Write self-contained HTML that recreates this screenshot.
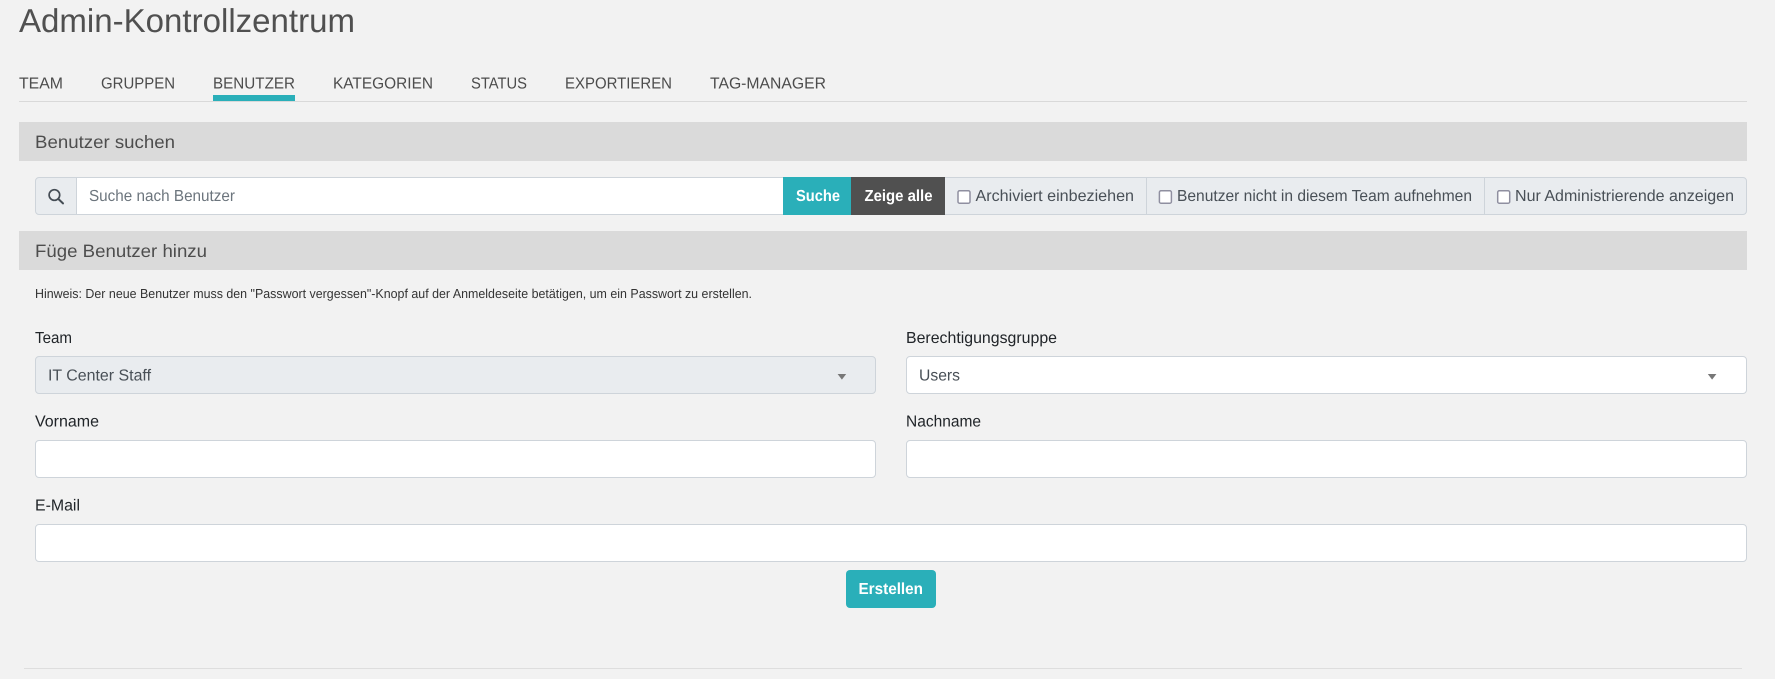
<!DOCTYPE html>
<html lang="de">
<head>
<meta charset="utf-8">
<title>Admin-Kontrollzentrum</title>
<style>
html,body{margin:0;padding:0;width:1775px;height:679px;overflow:hidden;background:#f2f2f2}
.b{position:absolute;box-sizing:border-box}
.f{border:1px solid #ced4da;border-radius:4px;background:#fff;height:38px}
.h{background:#dadada;left:19px;width:1728px;height:39px}
svg.o{position:absolute;left:0;top:0}
text{font-family:"Liberation Sans",sans-serif;text-rendering:geometricPrecision}
.cb{fill:#fff;stroke:#8f8fa0;stroke-width:1.5}
.t{font-size:16px;fill:#4c4c4c}
.l{font-size:16px;fill:#212529}
.a{font-size:16px;fill:#495057}
.w{font-size:16px;font-weight:700;fill:#fff}
.s{font-size:18px;fill:#4d4d4d}
</style>
</head>
<body>
<div class="b" style="left:19px;top:101px;width:1728px;height:1px;background:#d9d9d9"></div>
<div class="b" style="left:213px;top:95px;width:82px;height:6px;background:#2aafb9"></div>
<div class="b h" style="top:122px"></div>
<div class="b" style="left:35px;top:177px;width:1712px;height:38px;border:1px solid #ced4da;border-radius:4px;background:#e9ecef"></div>
<div class="b" style="left:76px;top:177px;width:707px;height:38px;background:#fff;border:1px solid #ced4da;border-right:0"></div>
<div class="b" style="left:783px;top:177px;width:68px;height:38px;background:#2aafb9"></div>
<div class="b" style="left:851px;top:177px;width:94px;height:38px;background:#505050"></div>
<div class="b" style="left:1146px;top:177px;width:1px;height:38px;background:#ced4da"></div>
<div class="b" style="left:1484px;top:177px;width:1px;height:38px;background:#ced4da"></div>
<div class="b h" style="top:231px"></div>
<div class="b f" style="left:35px;top:356px;width:841px;background:#e9ecef"></div>
<div class="b f" style="left:906px;top:356px;width:841px"></div>
<div class="b f" style="left:35px;top:440px;width:841px"></div>
<div class="b f" style="left:906px;top:440px;width:841px"></div>
<div class="b f" style="left:35px;top:524px;width:1712px"></div>
<div class="b" style="left:846px;top:570px;width:90px;height:38px;background:#2aafb9;border-radius:4px"></div>
<div class="b" style="left:24px;top:668px;width:1718px;height:1px;background:#dedede"></div>

<svg class="o" width="1775" height="679" viewBox="0 0 1775 679" xmlns="http://www.w3.org/2000/svg">
<text x="19" y="32" font-size="33" fill="#505050" textLength="336" lengthAdjust="spacingAndGlyphs">Admin-Kontrollzentrum</text>

<text class="t" x="19" y="88.5" textLength="44" lengthAdjust="spacingAndGlyphs">TEAM</text>
<text class="t" x="101" y="88.5" textLength="74" lengthAdjust="spacingAndGlyphs">GRUPPEN</text>
<text class="t" x="213" y="88.5" textLength="82" lengthAdjust="spacingAndGlyphs">BENUTZER</text>
<text class="t" x="333" y="88.5" textLength="100" lengthAdjust="spacingAndGlyphs">KATEGORIEN</text>
<text class="t" x="471" y="88.5" textLength="56" lengthAdjust="spacingAndGlyphs">STATUS</text>
<text class="t" x="565" y="88.5" textLength="107" lengthAdjust="spacingAndGlyphs">EXPORTIEREN</text>
<text class="t" x="710" y="88.5" textLength="116" lengthAdjust="spacingAndGlyphs">TAG-MANAGER</text>

<text class="s" x="35" y="148" textLength="140" lengthAdjust="spacingAndGlyphs">Benutzer suchen</text>

<circle cx="54.4" cy="195" r="5.3" fill="none" stroke="#444c54" stroke-width="1.7"/>
<path d="M58.4 199L63 203.4" fill="none" stroke="#444c54" stroke-width="2" stroke-linecap="round"/>
<text x="89" y="201" font-size="16" fill="#6c757d" textLength="146" lengthAdjust="spacingAndGlyphs">Suche nach Benutzer</text>
<text class="w" x="796" y="201" textLength="44" lengthAdjust="spacingAndGlyphs">Suche</text>
<text class="w" x="864.5" y="201" textLength="68" lengthAdjust="spacingAndGlyphs">Zeige alle</text>

<rect class="cb" x="958" y="190.8" width="12" height="12.4" rx="1.5"/>
<text class="a" x="975.5" y="201" textLength="158.5" lengthAdjust="spacingAndGlyphs">Archiviert einbeziehen</text>
<rect class="cb" x="1159.4" y="190.8" width="12" height="12.4" rx="1.5"/>
<text class="a" x="1177" y="201" textLength="295" lengthAdjust="spacingAndGlyphs">Benutzer nicht in diesem Team aufnehmen</text>
<rect class="cb" x="1497.7" y="190.8" width="12" height="12.4" rx="1.5"/>
<text class="a" x="1515" y="201" textLength="219" lengthAdjust="spacingAndGlyphs">Nur Administrierende anzeigen</text>

<text class="s" x="35" y="257" textLength="172" lengthAdjust="spacingAndGlyphs">Füge Benutzer hinzu</text>
<text x="35" y="298" font-size="13" fill="#333" textLength="717" lengthAdjust="spacingAndGlyphs">Hinweis: Der neue Benutzer muss den "Passwort vergessen"-Knopf auf der Anmeldeseite betätigen, um ein Passwort zu erstellen.</text>

<text class="l" x="35" y="343" textLength="37" lengthAdjust="spacingAndGlyphs">Team</text>
<text class="l" x="906" y="343" textLength="151" lengthAdjust="spacingAndGlyphs">Berechtigungsgruppe</text>
<text class="a" x="48" y="380.5" textLength="103" lengthAdjust="spacingAndGlyphs">IT Center Staff</text>
<path d="M837.6 374h8.6l-4.3 5.6z" fill="#777"/>
<text class="a" x="919" y="380.5" textLength="41" lengthAdjust="spacingAndGlyphs">Users</text>
<path d="M1707.8 374h8.6l-4.3 5.6z" fill="#777"/>

<text class="l" x="35" y="426.5" textLength="64" lengthAdjust="spacingAndGlyphs">Vorname</text>
<text class="l" x="906" y="426.5" textLength="75" lengthAdjust="spacingAndGlyphs">Nachname</text>
<text class="l" x="35" y="510.5" textLength="45" lengthAdjust="spacingAndGlyphs">E-Mail</text>
<text class="w" x="858.5" y="594" textLength="64.5" lengthAdjust="spacingAndGlyphs">Erstellen</text>
</svg>
</body>
</html>
